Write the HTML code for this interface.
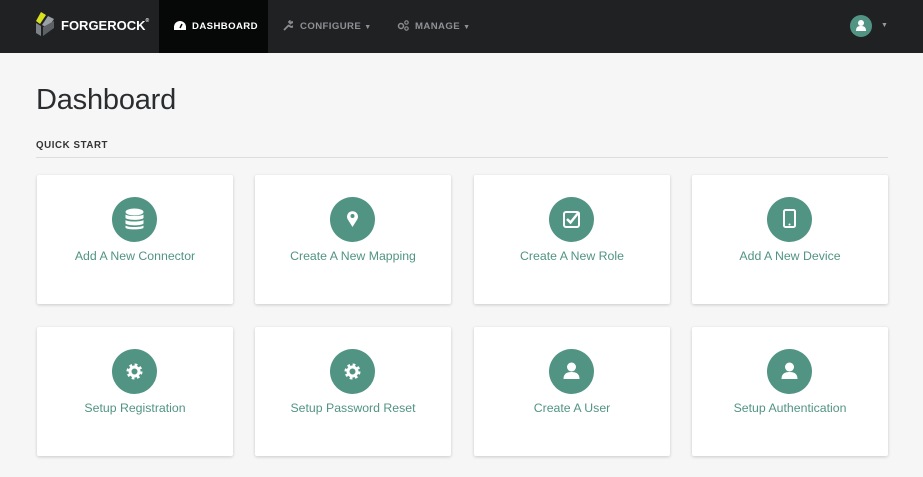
<!DOCTYPE html>
<html><head><style>
*{margin:0;padding:0;box-sizing:border-box}
body{width:923px;height:477px;overflow:hidden;background:#f6f6f6;font-family:"Liberation Sans",sans-serif;position:relative}
.nav{position:absolute;left:0;top:0;width:923px;height:53px;background:#1f2123}
.nav .act{position:absolute;left:159px;top:0;width:109px;height:53px;background:#060707}
.ni{position:absolute;top:21px;font-size:9.6px;font-weight:bold;letter-spacing:.4px}
h1{position:absolute;left:36px;top:84px;font-size:29px;font-weight:normal;color:#2a2d30;letter-spacing:-.2px}
.qs{position:absolute;left:36px;top:140px;font-size:9.7px;font-weight:bold;color:#333;letter-spacing:.6px}
.hr{position:absolute;left:36px;top:157px;width:852px;height:1px;background:#ddd}
.card{position:absolute;width:196px;height:129px;background:#fff;border-radius:2px;box-shadow:0 1px 3px rgba(0,0,0,.18)}
.card .c{position:absolute;left:75px;top:22px;width:45px;height:45px;border-radius:50%;background:#519483}
.card .c svg{position:absolute;left:0;top:0}
.card .t{position:absolute;left:0;width:100%;top:74px;text-align:center;color:#519483;font-size:12.3px}
</style></head><body>
<div class="nav">
<svg style="position:absolute;left:35px;top:12px" width="22" height="25" viewBox="0 0 22 25"><polygon points="6,0 11,3 5,12 1,9" fill="#d8e021"/><polygon points="13,4 19,7 13,16 7,13" fill="#9aa0a6"/><polygon points="1,11 6,14 6,24 1,21" fill="#7d8288"/><polygon points="8,15 19,9 19,16 8,24" fill="#5d6166"/></svg>
<div class="ni" style="left:61px;top:18px;font-size:13px;color:#fff;letter-spacing:0">FORGEROCK<span style="font-size:5px;vertical-align:top">®</span></div>
<div class="act"></div>
<svg style="position:absolute;left:174px;top:21px" width="12" height="10" viewBox="0 0 12 10"><path d="M6 0A6 6 0 0 0 0 6v3h12V6A6 6 0 0 0 6 0z" fill="#fff"/><path d="M6 7L8 3" stroke="#060707" stroke-width="1.5"/></svg>
<div class="ni" style="left:192px;color:#fff">DASHBOARD</div>
<svg style="position:absolute;left:283px;top:20px" width="10" height="11" viewBox="0 0 10 11"><path d="M1 10L6 5M6 5a2.5 2.5 0 1 0 3-3L7.5 3.5 6 2 7.5.5" stroke="#8a8d90" stroke-width="1.8" fill="none"/></svg>
<div class="ni" style="left:300px;color:#8f9295">CONFIGURE <span style="font-size:7px">▼</span></div>
<svg style="position:absolute;left:397px;top:20px" width="12" height="11" viewBox="0 0 12 11"><circle cx="4" cy="6" r="2.5" stroke="#8a8d90" stroke-width="1.5" fill="none"/><circle cx="9.5" cy="2.5" r="1.7" stroke="#8a8d90" stroke-width="1.2" fill="none"/><circle cx="9.5" cy="8.5" r="1.7" stroke="#8a8d90" stroke-width="1.2" fill="none"/></svg>
<div class="ni" style="left:415px;color:#8f9295">MANAGE <span style="font-size:7px">▼</span></div>
<div style="position:absolute;left:850px;top:15px;width:22px;height:22px;border-radius:50%;background:#519483"></div>
<svg style="position:absolute;left:855px;top:19px" width="12" height="13" viewBox="0 0 12 13"><circle cx="6" cy="4" r="3" fill="#fff"/><path d="M1 12c0-4 2-5 5-5s5 1 5 5z" fill="#fff"/></svg>
<div style="position:absolute;left:881px;top:22px;font-size:7px;color:#999">▼</div>
</div>
<h1>Dashboard</h1>
<div class="qs">QUICK START</div>
<div class="hr"></div>

<div class="card" style="left:37px;top:175px"><div class="c"><svg width="45" height="45"><g fill="#fff"><ellipse cx="22.5" cy="15" rx="9" ry="3.5"/><path d="M13.5 17.5c2 2 16 2 18 0v3.5c-2 2.5-16 2.5-18 0z"/><path d="M13.5 23c2 2 16 2 18 0v3.5c-2 2.5-16 2.5-18 0z"/><path d="M13.5 28.5c2 2 16 2 18 0v2c0 2.5-18 2.5-18 0z"/></g></svg></div><div class="t">Add A New Connector</div></div>
<div class="card" style="left:255px;top:175px"><div class="c"><svg width="45" height="45"><path d="M22.5 30l-5-8a5.5 5.5 0 1 1 10 0z" fill="#fff"/><circle cx="22.5" cy="19" r="2" fill="#519483"/></svg></div><div class="t">Create A New Mapping</div></div>
<div class="card" style="left:474px;top:175px"><div class="c"><svg width="45" height="45"><rect x="15" y="15" width="15" height="15" rx="2" fill="none" stroke="#fff" stroke-width="2"/><path d="M18 22l3.5 3.5L30 15" stroke="#fff" stroke-width="2.5" fill="none"/></svg></div><div class="t">Create A New Role</div></div>
<div class="card" style="left:692px;top:175px"><div class="c"><svg width="45" height="45"><rect x="17" y="13" width="11" height="17" rx="1.5" fill="none" stroke="#fff" stroke-width="2"/><circle cx="22.5" cy="27.5" r="1" fill="#fff"/></svg></div><div class="t">Add A New Device</div></div>

<div class="card" style="left:37px;top:327px"><div class="c"><svg width="45" height="45"><circle cx="22.5" cy="22.5" r="6" fill="none" stroke="#fff" stroke-width="4" stroke-dasharray="2.4 2.3"/><circle cx="22.5" cy="22.5" r="4.5" fill="none" stroke="#fff" stroke-width="3"/></svg></div><div class="t">Setup Registration</div></div>
<div class="card" style="left:255px;top:327px"><div class="c"><svg width="45" height="45"><circle cx="22.5" cy="22.5" r="6" fill="none" stroke="#fff" stroke-width="4" stroke-dasharray="2.4 2.3"/><circle cx="22.5" cy="22.5" r="4.5" fill="none" stroke="#fff" stroke-width="3"/></svg></div><div class="t">Setup Password Reset</div></div>
<div class="card" style="left:474px;top:327px"><div class="c"><svg width="45" height="45"><circle cx="22.5" cy="18" r="4.5" fill="#fff"/><path d="M14.5 30c0-5 3-7 8-7s8 2 8 7z" fill="#fff"/></svg></div><div class="t">Create A User</div></div>
<div class="card" style="left:692px;top:327px"><div class="c"><svg width="45" height="45"><circle cx="22.5" cy="18" r="4.5" fill="#fff"/><path d="M14.5 30c0-5 3-7 8-7s8 2 8 7z" fill="#fff"/></svg></div><div class="t">Setup Authentication</div></div>
</body></html>
